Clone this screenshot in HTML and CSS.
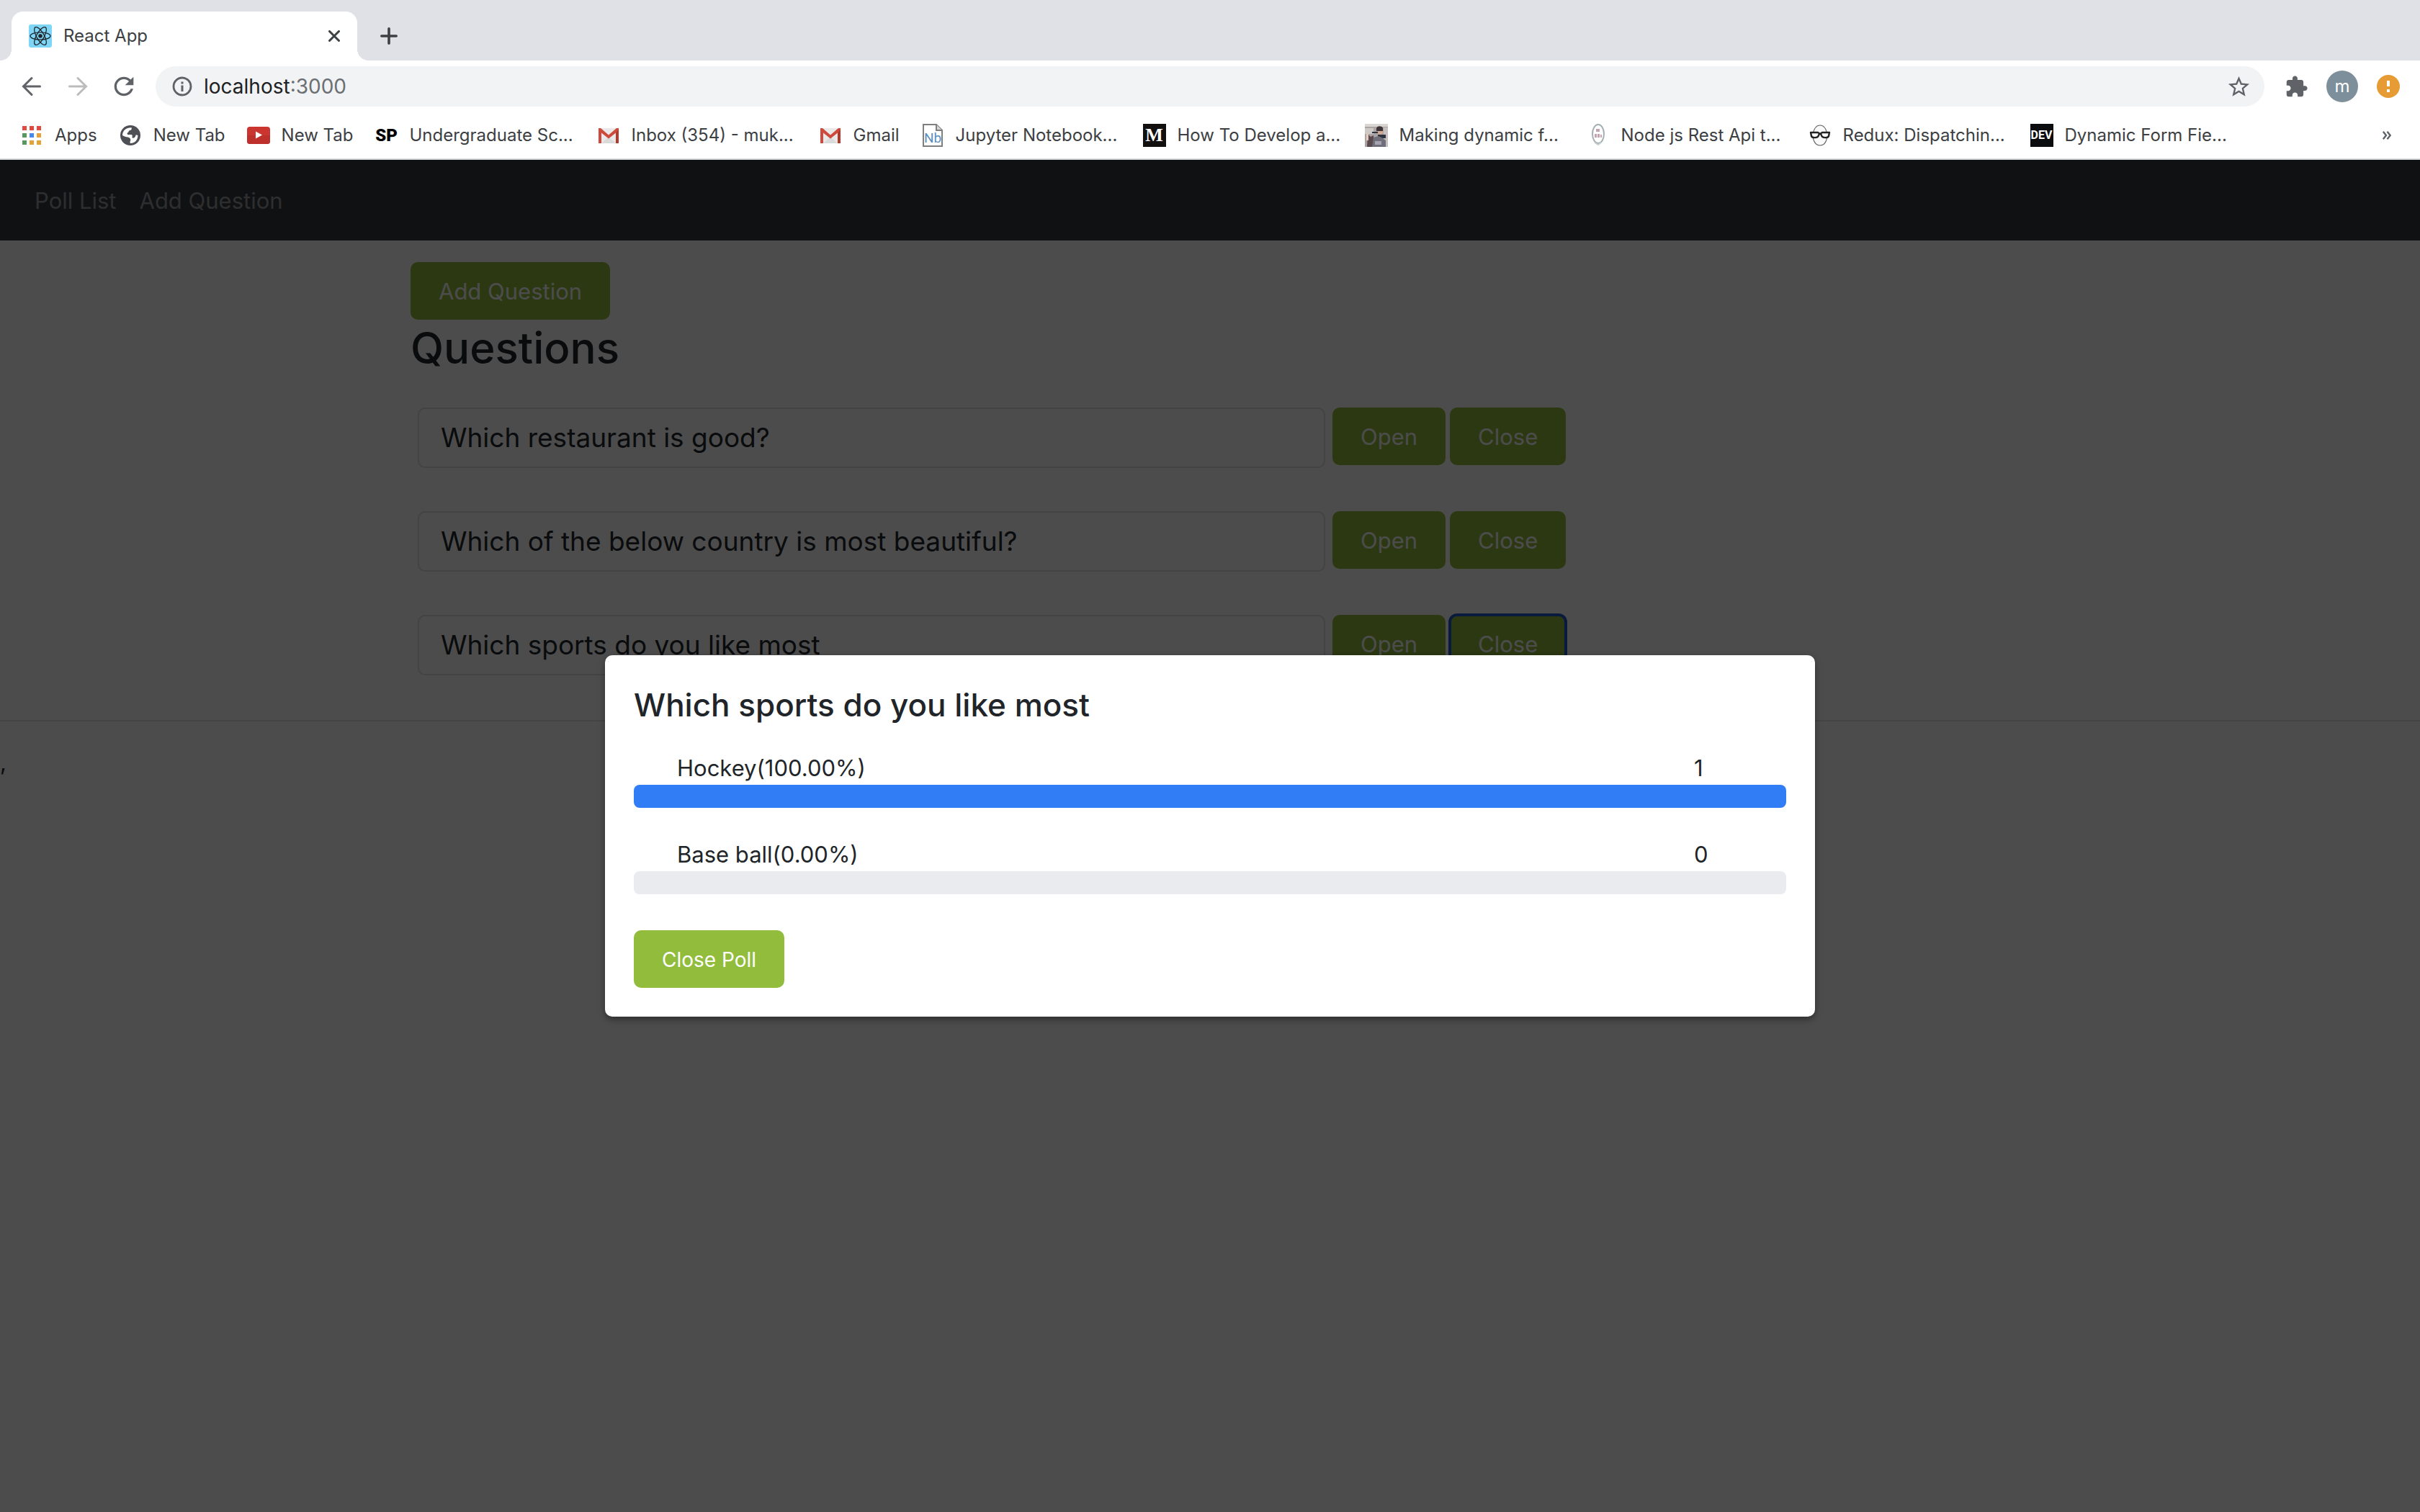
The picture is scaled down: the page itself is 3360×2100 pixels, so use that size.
FILE: index.html
```html
<!DOCTYPE html>
<html lang="en">
<head>
  <meta charset="utf-8">
  <meta name="viewport" content="width=device-width, initial-scale=1">
  <title>React App</title>
  <link rel="stylesheet" href="styles.css">
</head>
<body>
  <header class="browser">
    <div class="tabstrip">
      <div class="tab">
        <svg class="tab-icon" viewBox="0 0 32 32" aria-hidden="true">
          <rect width="32" height="32" rx="3" fill="#7ed6f7"/>
          <g fill="none" stroke="#20232a" stroke-width="1.3">
            <ellipse cx="16" cy="16" rx="14" ry="5.2"/>
            <ellipse cx="16" cy="16" rx="14" ry="5.2" transform="rotate(60 16 16)"/>
            <ellipse cx="16" cy="16" rx="14" ry="5.2" transform="rotate(120 16 16)"/>
          </g>
          <circle cx="16" cy="16" r="2.8" fill="#20232a"/>
        </svg>
        <span class="tab-title">React App</span>
        <button class="icon-button tab-close" type="button" aria-label="Close tab">
          <svg width="16" height="16" viewBox="0 0 16 16"><path d="M1.5 1.5l13 13M14.5 1.5l-13 13" stroke="#3c4043" stroke-width="3" stroke-linecap="round"/></svg>
        </button>
      </div>
      <button class="icon-button new-tab" type="button" aria-label="New tab">
        <svg width="24" height="24" viewBox="0 0 24 24"><path d="M12 1.8v20.4M1.8 12h20.4" stroke="#3c4043" stroke-width="3.6" stroke-linecap="round"/></svg>
      </button>
    </div>

    <div class="toolbar">
      <nav class="history" aria-label="History">
        <button class="icon-button" type="button" aria-label="Back">
          <svg width="28" height="28" viewBox="0 0 28 28" fill="none" stroke="#5f6368" stroke-width="3" stroke-linecap="round"><path d="M25.500 14H3M14 2.500L2.500 14 14 25.500"/></svg>
        </button>
        <button class="icon-button" type="button" aria-label="Forward">
          <svg width="28" height="28" viewBox="0 0 28 28" fill="none" stroke="#babcbe" stroke-width="3" stroke-linecap="round"><path d="M2.500 14H25M14 2.500L25.500 14 14 25.500"/></svg>
        </button>
        <button class="icon-button" type="button" aria-label="Reload">
          <svg width="40" height="40" viewBox="0 0 24 24" fill="#5f6368"><path d="M17.650 6.350C16.200 4.900 14.210 4 12 4c-4.420 0-7.990 3.580-7.990 8s3.570 8 7.990 8c3.730 0 6.840-2.550 7.730-6h-2.080c-.82 2.330-3.040 4-5.650 4-3.310 0-6-2.690-6-6s2.690-6 6-6c1.660 0 3.140.69 4.220 1.780L13 11h7V4l-2.350 2.350z"/></svg>
        </button>
      </nav>
      <div class="address">
        <svg width="28" height="28" viewBox="0 0 28 28" aria-hidden="true"><circle cx="14" cy="14" r="12" fill="none" stroke="#5f6368" stroke-width="2.800"/><path d="M12.500 12.500h3V21h-3zM12.500 7.500h3v3h-3z" fill="#5f6368"/></svg>
        <div class="url">
          <input class="url-host" type="text" value="localhost" aria-label="Address"><span class="url-port">:3000</span>
        </div>
        <button class="icon-button" type="button" aria-label="Bookmark this page">
          <svg width="35" height="35" viewBox="0 0 24 24" fill="#5f6368"><path d="M22 9.240l-7.190-.62L12 2 9.190 8.630 2 9.240l5.460 4.730L5.820 21 12 17.270 18.180 21l-1.630-7.030L22 9.240zM12 15.400l-3.760 2.270 1-4.280-3.320-2.880 4.380-.38L12 6.100l1.710 4.040 4.380.38-3.320 2.880 1 4.280L12 15.400z"/></svg>
        </button>
      </div>
      <div class="browser-actions">
        <button class="icon-button" type="button" aria-label="Extensions">
          <svg width="33" height="33" viewBox="0 0 24 24" fill="#5f6368"><path d="M20.500 11H19V7c0-1.100-.9-2-2-2h-4V3.500C13 2.120 11.880 1 10.500 1S8 2.120 8 3.500V5H4c-1.100 0-1.990.9-1.990 2v3.800H3.500c1.490 0 2.700 1.210 2.700 2.700s-1.210 2.700-2.700 2.700H2V20c0 1.100.9 2 2 2h3.800v-1.500c0-1.490 1.210-2.700 2.700-2.700 1.490 0 2.700 1.210 2.700 2.700V22H17c1.100 0 2-.9 2-2v-4h1.500c1.380 0 2.500-1.120 2.500-2.500S21.880 11 20.500 11z"/></svg>
        </button>
        <button class="icon-button profile" type="button" aria-label="Profile">m</button>
        <button class="icon-button" type="button" aria-label="Update available">
          <svg width="32" height="32" viewBox="0 0 32 32"><circle cx="16" cy="16" r="16" fill="#e69b35"/><path d="M14 8h4v8h-4zM14 20h4v4h-4z" fill="#fff"/></svg>
        </button>
      </div>
    </div>

    <nav class="bookmarks" aria-label="Bookmarks">
      <a class="bookmark" href="#">
        <svg class="favicon" viewBox="0 0 32 32" aria-hidden="true">
          <path d="M3 3h6v6H3zM13 3h6v6h-6zM23 3h6v6h-6z" fill="#e2483d"/>
          <path d="M3 13h6v6H3zM3 23h6v6H3z" fill="#55995c"/>
          <path d="M13 13h6v6h-6z" fill="#4688f1"/>
          <path d="M23 13h6v6h-6zM13 23h6v6h-6zM23 23h6v6h-6z" fill="#e5a237"/>
        </svg>
        <span>Apps</span>
      </a>
      <a class="bookmark" href="#">
        <svg class="favicon" viewBox="0 0 32 32" aria-hidden="true">
          <circle cx="16" cy="16" r="14" fill="#4e5056"/>
          <path d="M5 16C5 9.500 10 5 17.500 5.200c1 2.300-.5 3.800-2.700 4-1.300.1-.6 2.200-2.600 3-1 .4-.6 2.600.4 2.800h4.800c1.600.2 1.800 2.800.8 4 1.600 1.400 3.800.6 4.600-1.400l1-2.400 2.600.8C26.500 22.500 22 27 16 27c-.8-1.400-.4-3 .4-4-.2-2.800-1.600-4-4-4.400C10 18.200 7.500 17.500 5 16z" fill="#fff"/>
        </svg>
        <span>New Tab</span>
      </a>
      <a class="bookmark" href="#">
        <svg class="favicon" viewBox="0 0 32 32" aria-hidden="true">
          <rect y="4" width="32" height="24" rx="4" fill="#cb3530"/>
          <path d="M0 16h32v8a4 4 0 0 1-4 4H4a4 4 0 0 1-4-4z" fill="#bd302c"/>
          <path d="M12 10.500v10l9-5z" fill="#fff"/>
        </svg>
        <span>New Tab</span>
      </a>
      <a class="bookmark bookmark-long" href="#">
        <span class="favicon favicon-sp" aria-hidden="true">SP</span>
        <span>Undergraduate Sc...</span>
      </a>
      <a class="bookmark bookmark-long" href="#">
        <svg class="favicon" viewBox="0 0 32 32" aria-hidden="true">
          <path d="M2 6h28v21H2z" fill="#e9e9e9"/>
          <path d="M6 27l10-9 10 9z" fill="#dadada"/>
          <path d="M2 6h3l11 9.500L27 6h3v21h-4V12.500L16 20.500 6 12.500V27H2z" fill="#ce4a3c"/>
          <path d="M26 12.500l4-5V27h-4z" fill="#b23a2c"/>
        </svg>
        <span>Inbox (354) - muk...</span>
      </a>
      <a class="bookmark" href="#">
        <svg class="favicon" viewBox="0 0 32 32" aria-hidden="true">
          <path d="M2 6h28v21H2z" fill="#e9e9e9"/>
          <path d="M6 27l10-9 10 9z" fill="#dadada"/>
          <path d="M2 6h3l11 9.500L27 6h3v21h-4V12.500L16 20.500 6 12.500V27H2z" fill="#ce4a3c"/>
          <path d="M26 12.500l4-5V27h-4z" fill="#b23a2c"/>
        </svg>
        <span>Gmail</span>
      </a>
      <a class="bookmark bookmark-long" href="#">
        <svg class="favicon" viewBox="0 0 32 32" aria-hidden="true">
          <path d="M3 1h18l8 8v22H3z" fill="#fff" stroke="#7f7f7f" stroke-width="2"/>
          <path d="M21 1v8h8" fill="#d8d8d8" stroke="#7f7f7f" stroke-width="2"/>
          <text x="16" y="26" text-anchor="middle" class="notebook-mark">Nb</text>
        </svg>
        <span>Jupyter Notebook...</span>
      </a>
      <a class="bookmark bookmark-long" href="#">
        <span class="favicon favicon-medium" aria-hidden="true">M</span>
        <span>How To Develop a...</span>
      </a>
      <a class="bookmark bookmark-long" href="#">
        <svg class="favicon" viewBox="0 0 32 32" aria-hidden="true">
          <rect width="32" height="32" fill="#aaa4a5"/>
          <path d="M0 0h32v4H0z" fill="#d8d5d3"/>
          <path d="M0 6h12v8H0z" fill="#cfc9c6"/>
          <path d="M26 5h6v27h-6z" fill="#c7bfbd"/>
          <path d="M4 14l4 4 4-2 1 16H3z" fill="#5a4a4e"/>
          <path d="M2 14h3v9H2z" fill="#e4c9bd"/>
          <path d="M17 6c5-3 9 0 8 5l-2 5h-4z" fill="#d3a893"/>
          <path d="M16 6c2-4 8-3 9 0v4h-9z" fill="#3d3236"/>
          <path d="M18 15h11v5H18zM10 11h8v2h-8z" fill="#2d3340"/>
          <path d="M12 19l7-2 6 3 4 3v9H10z" fill="#6f6f7c"/>
          <path d="M14 24h9v5h-9z" fill="#a5a4ae"/>
        </svg>
        <span>Making dynamic f...</span>
      </a>
      <a class="bookmark bookmark-long" href="#">
        <svg class="favicon" viewBox="0 0 32 32" aria-hidden="true">
          <ellipse cx="16" cy="14" rx="8" ry="13" fill="#fff" stroke="#a4afb2" stroke-width="2"/>
          <path d="M13 7h5v4h-5zM11 14h3v5h-3zM15 14h3v5h-3zM19 15h2v4h-2z" fill="#b88d9b" opacity=".8"/>
          <path d="M11 26l5 3 4-3" fill="none" stroke="#c7d1d3" stroke-width="2"/>
        </svg>
        <span>Node js Rest Api t...</span>
      </a>
      <a class="bookmark bookmark-long" href="#">
        <svg class="favicon" viewBox="0 0 32 32" aria-hidden="true">
          <path d="M16 2C10 2 7 9 6 15c0 9 4 15 10 15s10-6 10-15C25 9 22 2 16 2z" fill="#fafafa" stroke="#666" stroke-width="1.200"/>
          <path d="M3 12h10l3 2 3-2h10l-1 5c-1 3-9 3-10-1l-1-2h-2l-1 2c-1 4-9 4-10 1z" fill="#fafafa" stroke="#222" stroke-width="2.400" stroke-linejoin="round"/>
        </svg>
        <span>Redux: Dispatchin...</span>
      </a>
      <a class="bookmark bookmark-long" href="#">
        <span class="favicon favicon-dev" aria-hidden="true">DEV</span>
        <span>Dynamic Form Fie...</span>
      </a>
      <button class="icon-button bookmarks-more" type="button" aria-label="More bookmarks">
        <svg width="12" height="12" viewBox="0 0 12 12" fill="none" stroke="#5f6368" stroke-width="2.400"><path d="M.8.8L5 6 .8 11.200M6.500.8L10.700 6l-4.200 5.200"/></svg>
      </button>
    </nav>
  </header>

  <div class="app">
    <nav class="navbar" aria-label="Main">
      <a href="#">Poll List</a>
      <a href="#">Add Question</a>
    </nav>

    <main class="container">
      <button class="btn" type="button">Add Question</button>
      <h1>Questions</h1>
      <ul class="questions">
        <li class="question">
          <div class="card">Which restaurant is good?</div>
          <div class="question-actions">
            <button class="btn" type="button">Open</button>
            <button class="btn" type="button">Close</button>
          </div>
        </li>
        <li class="question">
          <div class="card">Which of the below country is most beautiful?</div>
          <div class="question-actions">
            <button class="btn" type="button">Open</button>
            <button class="btn" type="button">Close</button>
          </div>
        </li>
        <li class="question">
          <div class="card">Which sports do you like most</div>
          <div class="question-actions">
            <button class="btn" type="button">Open</button>
            <button class="btn btn-focused" type="button">Close</button>
          </div>
        </li>
      </ul>
    </main>
    <hr>
    <p class="separator">,</p>

    <div class="overlay">
      <section class="modal" role="dialog" aria-modal="true" aria-labelledby="poll-title">
        <h2 id="poll-title">Which sports do you like most</h2>
        <div class="results">
          <div class="result">
            <label for="hockey">Hockey(100.00%)</label>
            <span>1</span>
            <progress id="hockey" max="100" value="100"></progress>
          </div>
          <div class="result">
            <label for="baseball">Base ball(0.00%)</label>
            <span>0</span>
            <progress id="baseball" max="100" value="0"></progress>
          </div>
        </div>
        <button class="btn btn-small" type="button">Close Poll</button>
      </section>
    </div>
  </div>
</body>
</html>
```
FILE: styles.css
```css
*,
*::before,
*::after {
  box-sizing: border-box;
}

body {
  margin: 0;
  min-height: 100vh;
  display: flex;
  flex-direction: column;
  background: #fff;
  color: #212529;
  font: 400 31px/50px Inter, "Liberation Sans", sans-serif;
}

button,
input {
  font: inherit;
}

a {
  color: inherit;
  text-decoration: none;
}

/* Browser window */

.browser {
  background: #fff;
  color: #3c4043;
  font-size: 24px;
  line-height: 32px;
}

.icon-button {
  display: flex;
  align-items: center;
  justify-content: center;
  width: 44px;
  height: 44px;
  padding: 0;
  border: 0;
  border-radius: 50%;
  background: none;
}

.icon-button svg {
  flex: none;
}

.tabstrip {
  display: flex;
  align-items: center;
  height: 84px;
  padding: 16px 16px 0;
  background: #dfe1e6;
}

.tab {
  position: relative;
  display: flex;
  align-items: center;
  gap: 16px;
  width: 480px;
  height: 68px;
  padding: 0 24px;
  border-radius: 16px 16px 0 0;
  background: #fff;
}

.tab::before,
.tab::after {
  content: "";
  position: absolute;
  bottom: 0;
  width: 16px;
  height: 16px;
}

.tab::before {
  right: 100%;
  background: radial-gradient(circle at 0 0, transparent 16px, #fff 16px);
}

.tab::after {
  left: 100%;
  background: radial-gradient(circle at 100% 0, transparent 16px, #fff 16px);
}

.tab-icon {
  width: 32px;
  height: 32px;
}

.tab-title {
  flex: 1;
}

.tab-close {
  width: 16px;
}

.new-tab {
  margin-left: 22px;
}

.toolbar {
  display: flex;
  align-items: center;
  height: 72px;
  padding: 0 22px 0 16px;
}

.history {
  display: flex;
  gap: 8px;
  margin-right: 16px;
}

.history .icon-button {
  width: 56px;
  height: 56px;
}

.address {
  flex: 1;
  display: flex;
  align-items: center;
  gap: 16px;
  height: 56px;
  margin-right: 22px;
  padding: 0 14px 0 23px;
  border-radius: 28px;
  background: #f1f3f4;
  font-size: 28px;
}

.url {
  flex: 1;
  display: flex;
  align-items: center;
}

.url-host {
  field-sizing: content;
  padding: 0;
  border: 0;
  background: none;
  color: #202124;
}

.url-port {
  color: #6b6e72;
}

.browser-actions {
  display: flex;
  gap: 20px;
}

.profile {
  background: #7d8f9b;
  color: #fff;
}

.bookmarks {
  display: flex;
  align-items: center;
  gap: 30px;
  height: 66px;
  padding: 0 24px 0 28px;
  border-bottom: 2px solid #d5d9dc;
  white-space: nowrap;
}

.bookmark {
  display: flex;
  align-items: center;
  gap: 16px;
}

.bookmark-long {
  width: 278px;
}

.bookmarks-more {
  margin-left: auto;
}

.favicon {
  flex: none;
  width: 32px;
  height: 32px;
  text-align: center;
}

.favicon-sp {
  color: #000;
  font: 900 24px/32px Roboto, sans-serif;
}

.favicon-medium {
  background: #12100e;
  color: #fff;
  font: 700 26px/32px "Liberation Serif", serif;
}

.favicon-dev {
  background: #0b0c0e;
  color: #fff;
  font: 700 16px/32px Roboto, sans-serif;
}

.notebook-mark {
  fill: #5b8fc0;
  font: 400 19px Roboto, sans-serif;
}

/* Poll application */

.app {
  position: relative;
  flex: 1;
}

.navbar {
  display: flex;
  align-items: center;
  gap: 32px;
  height: 112px;
  padding: 2px 48px 0;
  background: #343a40;
  color: rgba(255, 255, 255, 0.5);
}

.container {
  max-width: 2280px;
  margin: 0 auto;
  padding: 30px 30px 0;
}

.btn {
  height: 80px;
  padding: 2px 39px 0;
  border: 0;
  border-radius: 10px;
  background: #92bd3c;
  color: #fff;
}

.btn-small {
  font-size: 28px;
}

.btn-focused {
  outline: 4px solid #215dc8;
  outline-offset: -2px;
}

h1 {
  margin: 0 0 44px;
  font-size: 60px;
  font-weight: 500;
  line-height: 78px;
}

.container > .btn {
  display: block;
}

.questions {
  display: grid;
  gap: 60px;
  margin: 0;
  padding: 0 10px;
  list-style: none;
}

.question {
  display: grid;
  grid-template-columns: minmax(0, 1260px) auto;
  justify-content: start;
  gap: 10px;
}

.card {
  height: 84px;
  padding: 0 30px;
  border: 2px solid rgba(0, 0, 0, 0.125);
  border-radius: 10px;
  font-size: 37px;
  line-height: 80px;
}

.question-actions {
  display: flex;
  gap: 6px;
}

hr {
  margin: 62px 0 32px;
  border: 0;
  border-top: 2px solid rgba(0, 0, 0, 0.1);
}

.separator {
  margin: 0;
}

.overlay {
  position: absolute;
  inset: 0;
  display: flex;
  align-items: center;
  justify-content: center;
  background: rgba(0, 0, 0, 0.7);
}

.modal {
  width: 50%;
  padding: 40px;
  border-radius: 10px;
  background: #fff;
  box-shadow: 0 4px 10px rgba(0, 0, 0, 0.4);
}

.modal h2 {
  margin: 0 0 34px;
  font-size: 44px;
  font-weight: 500;
  line-height: 58px;
}

.results {
  display: grid;
  gap: 40px;
  margin-bottom: 50px;
}

.result {
  display: grid;
  grid-template-columns: 1fr 8%;
  grid-template-rows: 48px 32px;
}

.result label {
  padding-left: 60px;
}

.result progress {
  grid-column: 1 / -1;
  display: block;
  width: 100%;
  height: 32px;
  border: 0;
  border-radius: 8px;
  overflow: hidden;
  background: #e9ebef;
  appearance: none;
}

.result progress::-webkit-progress-bar {
  background: #e9ebef;
}

.result progress::-webkit-progress-value {
  background: #317df6;
}
```
